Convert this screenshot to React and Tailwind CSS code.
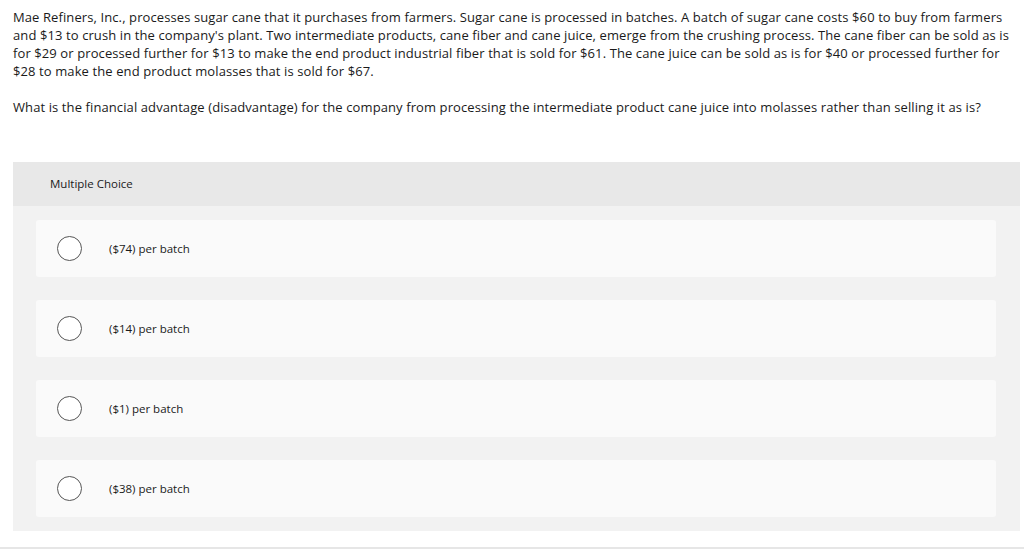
import React from "react";

const options = ["($74) per batch", "($14) per batch", "($1) per batch", "($38) per batch"];

const App = () => {
  return (
    <div
      className="w-[1024px] h-[552px] bg-white text-[#1a1a1a] overflow-hidden relative"
      style={{ fontFamily: "'Open Sans', 'Liberation Sans', sans-serif" }}
    >
      <div className="px-[13px] pt-[8px] text-[13px] leading-[18px] tracking-[0.1px]">
        <p className="whitespace-nowrap">
          Mae Refiners, Inc., processes sugar cane that it purchases from farmers. Sugar cane is processed in batches. A batch of sugar cane costs $60 to buy from farmers
          <br />
          and $13 to crush in the company's plant. Two intermediate products, cane fiber and cane juice, emerge from the crushing process. The cane fiber can be sold as is
          <br />
          for $29 or processed further for $13 to make the end product industrial fiber that is sold for $61. The cane juice can be sold as is for $40 or processed further for
          <br />
          $28 to make the end product molasses that is sold for $67.
        </p>
        <p className="mt-[18px]">
          What is the financial advantage (disadvantage) for the company from processing the intermediate product cane juice into molasses rather than selling it as is?
        </p>
      </div>

      <div className="ml-[13px] mt-[46px] w-[1007px] bg-[#f2f2f2] pb-[14px]">
        <div className="h-[44px] bg-[#e8e8e8] flex items-center pl-[37px] text-[11.5px]">
          Multiple Choice
        </div>
        <div className="flex flex-col gap-[23px] pt-[14px] pl-[23px] pr-[24px]">
          {options.map((o) => (
            <div key={o} className="h-[57px] bg-[#fafafa] rounded-[3px] flex items-center">
              <span className="ml-[21px] w-[25px] h-[25px] rounded-full border border-[#555] bg-white" />
              <span className="ml-[27px] text-[11.5px] pt-[1px]">{o}</span>
            </div>
          ))}
        </div>
      </div>

      <div className="absolute left-0 right-0 top-[547px] h-[2px] bg-[#e6e6e6]" />
    </div>
  );
};

export default App;
